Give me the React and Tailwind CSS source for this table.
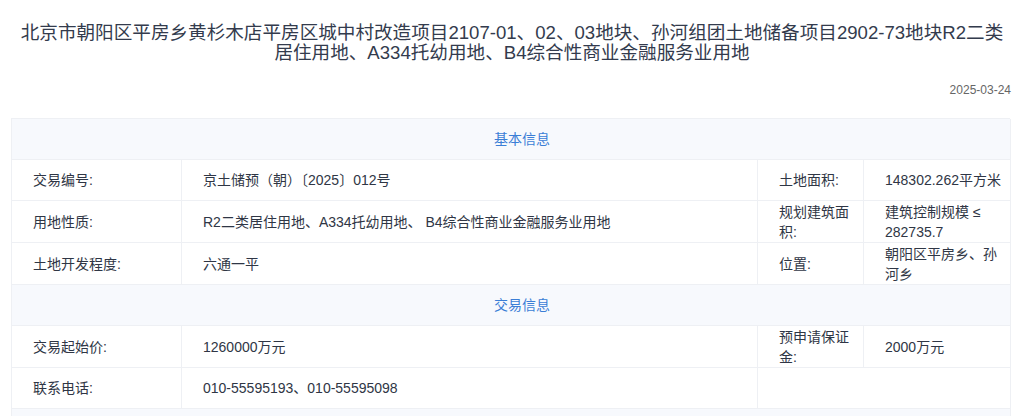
import React from "react";

const FONT = { fontFamily: '"Helvetica Neue", "Liberation Sans", "Noto Sans CJK SC", sans-serif' };

const Cell = ({ children, className = "", pr = "pr-[10px]" }) => (
  <div className={`flex items-center border-r border-b border-[#eef0f4] pl-[21px] ${pr} leading-[20px] ${className}`}>
    {children}
  </div>
);

const SectionHead = ({ title }) => (
  <div className="col-span-4 flex h-[41px] items-center justify-center border-r border-b border-[#eef0f4] bg-[#f7f9fd] pl-[22px] text-[14px] text-[#3b7ed6]">
    {title}
  </div>
);

const App = () => {
  return (
    <div className="w-[1024px] bg-white text-[#2f3645]" style={FONT}>
      <h1 className="px-[8px] pt-[23px] text-center text-[18.6px] font-normal leading-[20px] text-[#333b4d]">
        北京市朝阳区平房乡黄杉木店平房区城中村改造项目2107-01、02、03地块、孙河组团土地储备项目2902-73地块R2二类
        <br />
        居住用地、A334托幼用地、B4综合性商业金融服务业用地
      </h1>
      <div className="mt-[19px] pr-[13px] text-right text-[12px] leading-[16px] text-[#666]">2025-03-24</div>

      <div className="mt-[20px] ml-[11px] grid w-[999px] grid-cols-[170px_576px_106px_147px] border-t border-l border-[#eef0f4] text-[14px]">
        <SectionHead title="基本信息" />

        <Cell className="h-[41px]">交易编号:</Cell>
        <Cell>京土储预（朝）〔2025〕012号</Cell>
        <Cell>土地面积:</Cell>
        <Cell pr="pr-[3px]">148302.262平方米</Cell>

        <Cell className="h-[42px]">用地性质:</Cell>
        <Cell>R2二类居住用地、A334托幼用地、 B4综合性商业金融服务业用地</Cell>
        <Cell>规划建筑面积:</Cell>
        <Cell pr="pr-[3px]">建筑控制规模 ≤ 282735.7</Cell>

        <Cell className="h-[42px]">土地开发程度:</Cell>
        <Cell>六通一平</Cell>
        <Cell>位置:</Cell>
        <Cell pr="pr-[3px]">朝阳区平房乡、孙河乡</Cell>

        <SectionHead title="交易信息" />

        <Cell className="h-[42px]">交易起始价:</Cell>
        <Cell>1260000万元</Cell>
        <Cell>预申请保证金:</Cell>
        <Cell pr="pr-[3px]">2000万元</Cell>

        <Cell className="h-[41px]">联系电话:</Cell>
        <Cell>010-55595193、010-55595098</Cell>
        <Cell className="col-span-2" />

        <SectionHead title="" />
      </div>
    </div>
  );
};

export default App;
